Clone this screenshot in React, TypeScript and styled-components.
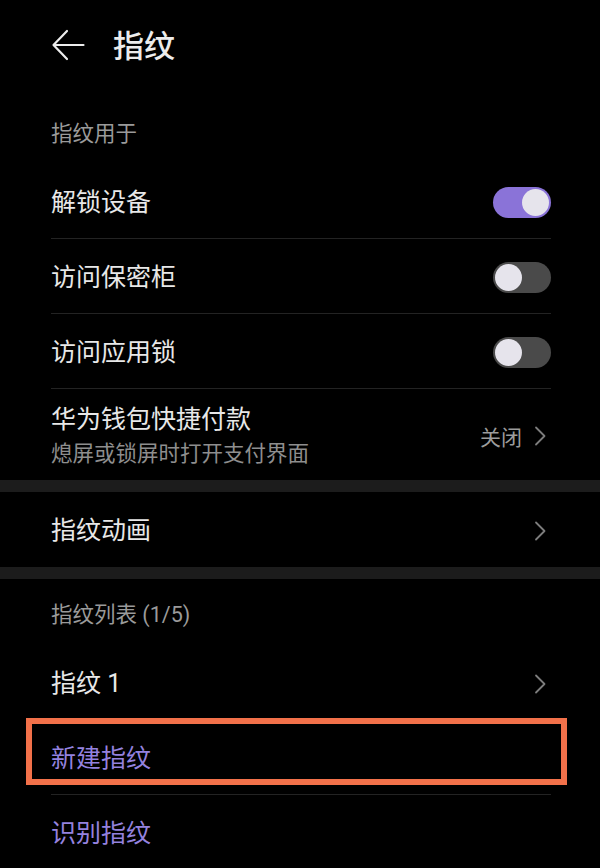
import React from "react";
import styled, { createGlobalStyle } from "styled-components";

const Global = createGlobalStyle`
  html, body { margin: 0; padding: 0; background: #000; }
  body { font-family: Roboto, "Noto Sans CJK SC", "Noto Sans", sans-serif; }
  * { box-sizing: border-box; }
`;

const Page = styled.div`
  width: 600px;
  height: 868px;
  overflow: hidden;
  background: #000;
  color: #e8e8e8;
  display: flex;
  flex-direction: column;
`;

const AppBar = styled.header`
  height: 98px;
  flex: none;
  display: flex;
  align-items: flex-start;
  padding: 28px 0 0 51px;
  gap: 28px;
`;

const BackIcon = styled.svg`
  width: 34px;
  height: 34px;
  flex: none;
`;

const Title = styled.h1`
  margin: 0;
  font-size: 31px;
  font-weight: 500;
  line-height: 38px;
  color: #ececec;
`;

const SectionHeader = styled.div`
  height: 66px;
  flex: none;
  display: flex;
  align-items: center;
  padding: 1px 49px 0 51px;
  font-size: 21.5px;
  color: #9a9a9a;
`;

const Row = styled.div`
  flex: none;
  padding: 0 49px 0 51px;
  position: relative;
`;

const RowInner = styled.div<{ $h: number; $divider?: boolean }>`
  height: ${(p) => p.$h}px;
  display: flex;
  align-items: center;
  justify-content: space-between;
  padding-top: 3px;
  border-bottom: 1px solid ${(p) => (p.$divider ? "#232323" : "transparent")};
`;

const TextCol = styled.div`
  display: flex;
  flex-direction: column;
  gap: 6px;
`;

const Label = styled.span<{ $accent?: boolean }>`
  font-size: 25px;
  line-height: 30px;
  color: ${(p) => (p.$accent ? "#9482df" : "#e8e8e8")};
`;

const Sub = styled.span`
  font-size: 21.5px;
  line-height: 26px;
  color: #8e8e8e;
`;

const Trailing = styled.div`
  display: flex;
  align-items: center;
  gap: 12px;
  padding-right: 4px;
`;

const Value = styled.span`
  font-size: 21px;
  color: #9c9c9c;
`;

const Band = styled.div`
  height: 12px;
  flex: none;
  background: #1c1c1c;
`;

const Track = styled.div<{ $on?: boolean }>`
  width: 58px;
  height: 31px;
  border-radius: 16px;
  background: ${(p) => (p.$on ? "#8a73d8" : "#4a4a4a")};
  display: flex;
  align-items: center;
  justify-content: ${(p) => (p.$on ? "flex-end" : "flex-start")};
  padding: 0 2px;
`;

const Knob = styled.div`
  width: 27px;
  height: 27px;
  border-radius: 50%;
  background: #e6e4ec;
`;

const Highlight = styled.div`
  position: absolute;
  top: -2px;
  left: 26px;
  width: 541px;
  height: 67px;
  border: 6px solid #f2714a;
  pointer-events: none;
`;

const Chevron = () => (
  <svg width="13" height="20" viewBox="0 0 13 20" fill="none">
    <path d="M2 1.5 L10.5 10 L2 18.5" stroke="#7d7d7d" strokeWidth="1.8" strokeLinecap="round" strokeLinejoin="round" />
  </svg>
);

const Toggle = ({ on }: { on?: boolean }) => (
  <Track $on={on}>
    <Knob />
  </Track>
);

export default function App() {
  return (
    <Page>
      <Global />
      <AppBar>
        <BackIcon viewBox="0 0 34 34" fill="none">
          <path d="M2.5 17 H32.5 M16 3 L2.5 17 L16 31" stroke="#ececec" strokeWidth="2.2" strokeLinecap="round" strokeLinejoin="round" />
        </BackIcon>
        <Title>指纹</Title>
      </AppBar>

      <SectionHeader>指纹用于</SectionHeader>
      <Row>
        <RowInner $h={75} $divider>
          <Label>解锁设备</Label>
          <Toggle on />
        </RowInner>
      </Row>
      <Row>
        <RowInner $h={75} $divider>
          <Label>访问保密柜</Label>
          <Toggle />
        </RowInner>
      </Row>
      <Row>
        <RowInner $h={75} $divider>
          <Label>访问应用锁</Label>
          <Toggle />
        </RowInner>
      </Row>
      <Row>
        <RowInner $h={91}>
          <TextCol>
            <Label>华为钱包快捷付款</Label>
            <Sub>熄屏或锁屏时打开支付界面</Sub>
          </TextCol>
          <Trailing>
            <Value>关闭</Value>
            <Chevron />
          </Trailing>
        </RowInner>
      </Row>
      <Band />
      <Row>
        <RowInner $h={75}>
          <Label>指纹动画</Label>
          <Trailing>
            <Chevron />
          </Trailing>
        </RowInner>
      </Row>
      <Band />

      <SectionHeader>指纹列表 (1/5)</SectionHeader>
      <Row>
        <RowInner $h={75} $divider>
          <Label>指纹 1</Label>
          <Trailing>
            <Chevron />
          </Trailing>
        </RowInner>
      </Row>
      <Row>
        <RowInner $h={75} $divider>
          <Label $accent>新建指纹</Label>
        </RowInner>
        <Highlight />
      </Row>
      <Row>
        <RowInner $h={75}>
          <Label $accent>识别指纹</Label>
        </RowInner>
      </Row>
    </Page>
  );
}
